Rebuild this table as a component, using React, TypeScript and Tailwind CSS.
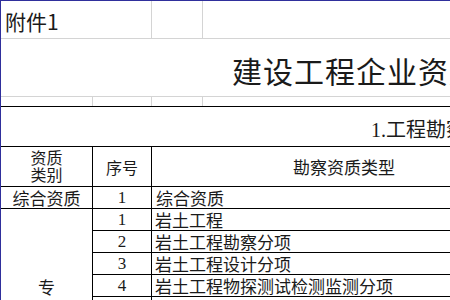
import React from "react";

const cjk = "font-['Noto_Sans_CJK_SC',sans-serif]";
const serifNum = "font-['Liberation_Serif','Noto_Sans_CJK_SC',serif]";

const rows = [
  { no: "1", name: "岩土工程" },
  { no: "2", name: "岩土工程勘察分项" },
  { no: "3", name: "岩土工程设计分项" },
  { no: "4", name: "岩土工程物探测试检测监测分项" },
  { no: "5", name: "水文地质勘察" },
];

export default function App() {
  return (
    <div className={cn("w-[450px] h-[300px] overflow-hidden bg-white text-[#1a1a1a] border-l border-t border-[#2f2f9c] flex flex-col", cjk)}>
      {/* 附件 row */}
      <div className="h-[38px] shrink-0 flex border-b border-[#d4d4d4]">
        <div className="w-[151px] shrink-0 border-r border-[#d4d4d4] pl-[4px] flex items-center text-[21px] leading-none pt-[4px]">附件1</div>
        <div className="w-[51px] shrink-0 border-r border-[#d4d4d4]" />
        <div className="flex-1" />
      </div>

      {/* title */}
      <div className="h-[58px] shrink-0 border-b border-[#d4d4d4] flex items-center pl-[231px] pt-[4px] whitespace-nowrap overflow-hidden text-[30px] leading-none tracking-[1px]">
        建设工程企业资质标准
      </div>

      {/* thin row */}
      <div className="h-[10px] shrink-0 flex border-b border-black">
        <div className="w-[92px] shrink-0 border-r border-[#d4d4d4]" />
        <div className="w-[59px] shrink-0 border-r border-[#d4d4d4]" />
        <div className="w-[51px] shrink-0 border-r border-[#d4d4d4]" />
      </div>

      {/* section title */}
      <div className={cn("h-[40px] shrink-0 border-b border-black flex items-center pl-[370px] pt-[6px] whitespace-nowrap overflow-hidden text-[20px] leading-none", serifNum)}>
        1.工程勘察资质标准
      </div>

      {/* header */}
      <div className="h-[40px] shrink-0 flex border-b border-black text-[16px]">
        <div className="w-[92px] shrink-0 border-r border-black flex flex-col items-center justify-center leading-[17px] pb-[2px]">
          <span className="block">资质</span>
          <span className="block">类别</span>
        </div>
        <div className="w-[59px] shrink-0 border-r border-black flex items-center justify-center">序号</div>
        <div className="flex-1 flex items-center pl-[141px] text-[17px] whitespace-nowrap">勘察资质类型</div>
      </div>

      {/* comprehensive */}
      <div className="h-[22px] shrink-0 flex border-b border-black text-[17px] leading-none">
        <div className="w-[92px] shrink-0 border-r border-black flex items-center justify-center">综合资质</div>
        <div className={cn("w-[59px] shrink-0 border-r border-black flex items-center justify-center", serifNum)}>1</div>
        <div className="flex-1 flex items-center pl-[4px]">综合资质</div>
      </div>

      {/* professional */}
      <div className="flex flex-1 min-h-0">
        <div className="w-[92px] shrink-0 border-r border-black flex flex-col items-center pt-[67px] text-[17px] leading-[22px]">
          <span className="block">专</span>
          <span className="block">业</span>
        </div>
        <div className="flex-1 flex flex-col">
          {rows.map((r) => (
            <div key={r.no} className="h-[22px] shrink-0 flex border-b border-black text-[17px] leading-none">
              <div className={cn("w-[59px] shrink-0 border-r border-black flex items-center justify-center", serifNum)}>{r.no}</div>
              <div className="flex-1 flex items-center pl-[3px] whitespace-nowrap">{r.name}</div>
            </div>
          ))}
        </div>
      </div>
    </div>
  );
}

function cn(...c: string[]) {
  return c.join(" ");
}
